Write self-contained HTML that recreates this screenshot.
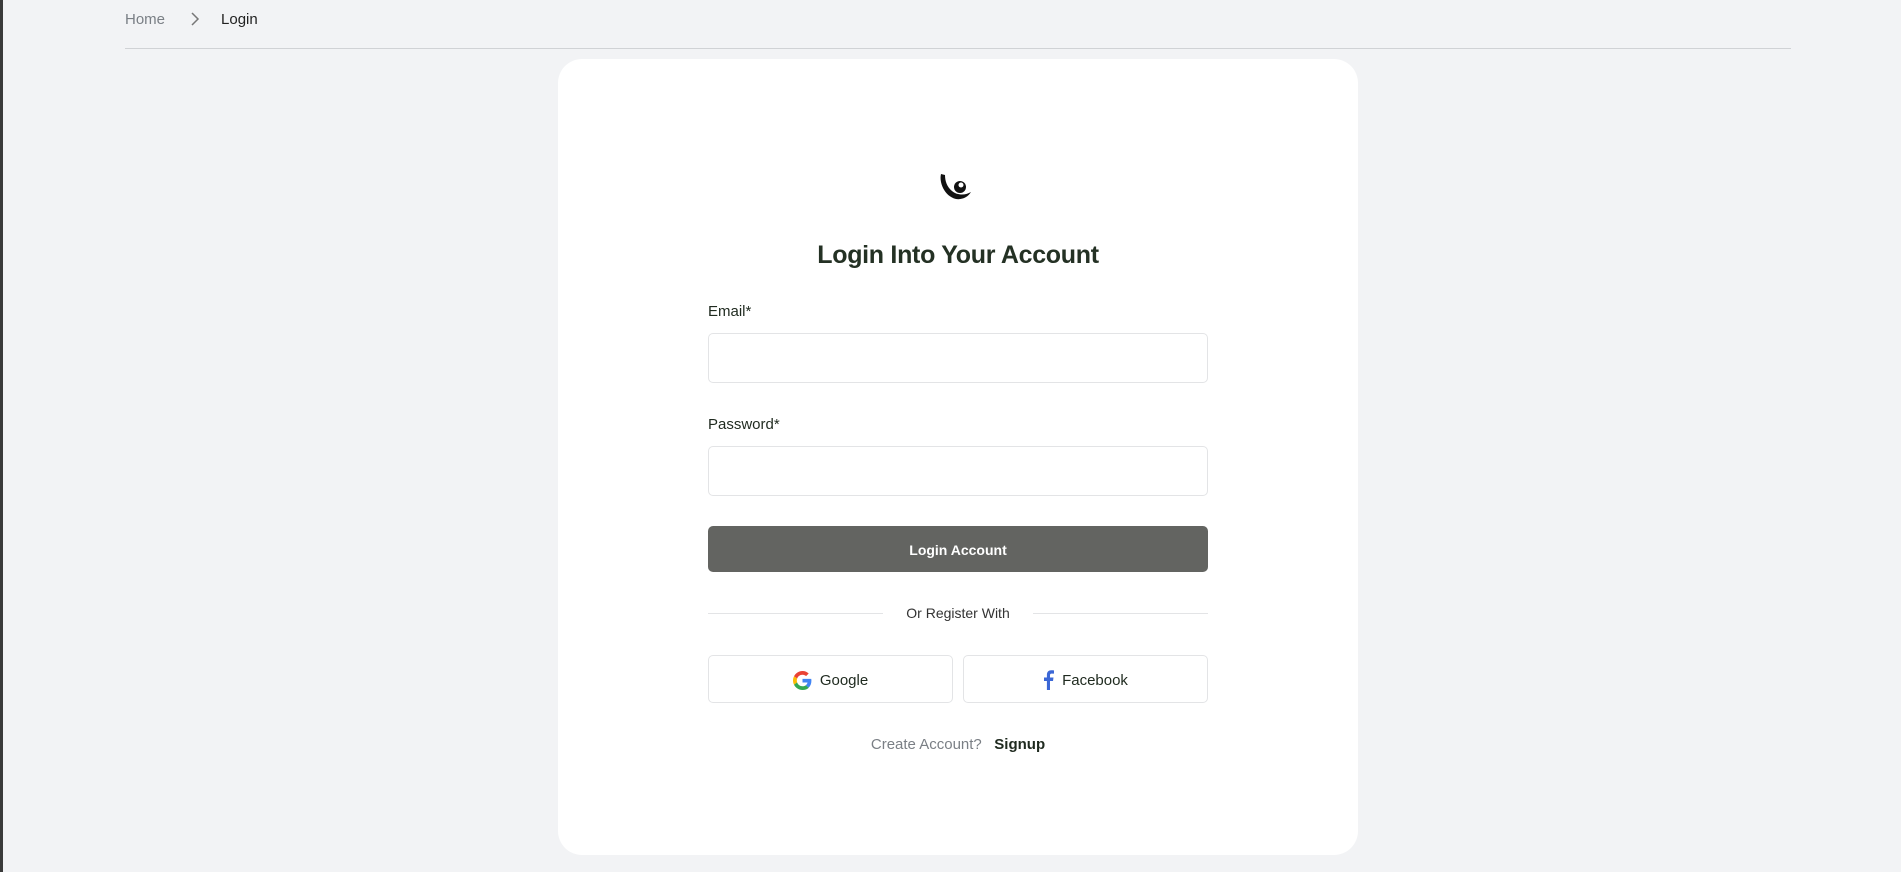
<!DOCTYPE html>
<html><head><meta charset="utf-8"><style>
*{box-sizing:border-box;margin:0;padding:0}
body{width:1901px;height:872px;background:#f2f3f5;font-family:"Liberation Sans",sans-serif;position:relative;overflow:hidden;color:#1f2a1f}
.bar{position:absolute;left:0;top:0;width:3px;height:872px;background:#3a3a3a}
.bc{position:absolute;top:9px;left:125px;font-size:15px;display:flex;align-items:center;height:20px}
.bc .h{color:#7a7f85}
.bc .l{color:#222;margin-left:20px}
.line{position:absolute;left:125px;width:1666px;top:48px;height:1px;background:#d0d2d5}
.card{position:absolute;left:558px;top:59px;width:800px;height:796px;background:#fff;border-radius:24px}
.abs{position:absolute}
.t{position:absolute;left:558px;width:800px;text-align:center}
.lbl{position:absolute;left:708px;font-size:15px;color:#1f2a1f}
.inp{position:absolute;left:708px;width:500px;height:50px;border:1px solid #e3e4e6;border-radius:5px;background:#fff}
.btn{position:absolute;left:708px;top:526px;width:500px;height:46px;background:#636461;border-radius:5px;color:#fff;font-weight:bold;font-size:14px;text-align:center;line-height:48px}
.soc{position:absolute;top:655px;width:245px;height:48px;border:1px solid #e3e4e6;border-radius:5px;display:flex;align-items:center;justify-content:center;font-size:15px;color:#1f2a1f;gap:8px;padding-top:2px}
</style></head><body>
<div class="bar"></div>
<div class="bc"><span class="h">Home</span>
<svg width="12" height="16" style="margin-left:24px" viewBox="0 0 12 16"><path d="M3 2l6 6-6 6" stroke="#777" stroke-width="1.5" fill="none"/></svg>
<span class="l">Login</span></div>
<div class="line"></div>
<div class="card"></div>
<svg class="abs" style="left:938px;top:172px" width="36" height="32" viewBox="0 0 36 32">
<path d="M3 2 C1 10 6 24 18 27 C24 28 30 25 33 20 C28 23 20 24 14 19 C9 15 7 9 7 3 Z" fill="#111"/>
<circle cx="22" cy="15" r="6" fill="#111"/><circle cx="23" cy="13" r="2.5" fill="#fff"/>
</svg>
<div class="t" style="top:241px;font-size:25px;font-weight:bold;color:#243124;letter-spacing:-0.3px">Login Into Your Account</div>
<div class="lbl" style="top:303px">Email*</div>
<div class="inp" style="top:333px"></div>
<div class="lbl" style="top:416px">Password*</div>
<div class="inp" style="top:446px"></div>
<div class="btn">Login Account</div>
<div class="abs" style="left:708px;top:613px;width:175px;height:1px;background:#e3e4e6"></div>
<div class="abs" style="left:1033px;top:613px;width:175px;height:1px;background:#e3e4e6"></div>
<div class="t" style="top:605px;font-size:14px;color:#333">Or Register With</div>
<div class="soc" style="left:708px"><svg width="19" height="19" viewBox="0 0 48 48"><path fill="#EA4335" d="M24 9.5c3.5 0 6.6 1.2 9 3.5l6.7-6.7C35.6 2.4 30.2 0 24 0 14.6 0 6.6 5.4 2.6 13.3l7.8 6C12.3 13.6 17.7 9.5 24 9.5z"/><path fill="#4285F4" d="M46.5 24.5c0-1.6-.1-3.1-.4-4.5H24v9h12.7c-.6 3-2.3 5.5-4.8 7.2l7.6 5.9c4.4-4.1 7-10.1 7-17.6z"/><path fill="#FBBC05" d="M10.4 28.7c-.5-1.4-.8-3-.8-4.7s.3-3.2.8-4.7l-7.8-6C.9 16.6 0 20.2 0 24s.9 7.4 2.6 10.7l7.8-6z"/><path fill="#34A853" d="M24 48c6.5 0 11.9-2.1 15.9-5.8l-7.6-5.9c-2.1 1.4-4.9 2.3-8.3 2.3-6.3 0-11.7-4.1-13.6-9.8l-7.8 6C6.6 42.6 14.6 48 24 48z"/></svg>Google</div>
<div class="soc" style="left:963px"><svg width="11" height="20" viewBox="0 0 11 20"><path d="M7 20V11h3l.5-3.5H7V5.3c0-1 .3-1.7 1.8-1.7H11V.4C10.6.3 9.5.2 8.3.2 5.7.2 3.9 1.8 3.9 4.7v2.8H1V11h2.9v9z" fill="#3b67d6"/></svg>Facebook</div>
<div class="t" style="top:736px;font-size:15px"><span style="color:#7a7f85">Create Account?</span>&nbsp;&nbsp; <b style="color:#1f2a1f">Signup</b></div>
</body></html>
